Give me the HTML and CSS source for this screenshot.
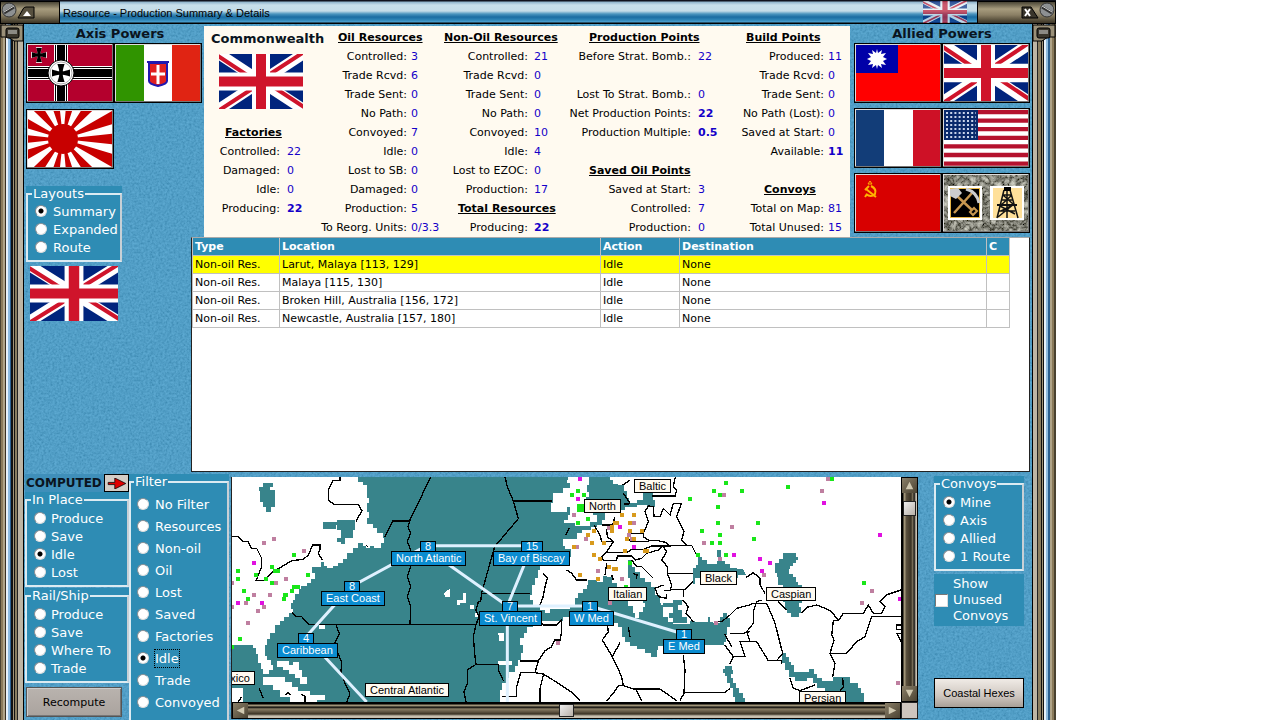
FILE: index.html
```html
<!DOCTYPE html>
<html lang="en">
<head>
<meta charset="utf-8">
<title>Resource - Production Summary &amp; Details</title>
<link rel="stylesheet" href="styles.css">
</head>
<body>
<svg class="defs" aria-hidden="true">
  <symbol id="uk" viewBox="0 0 84 55" preserveAspectRatio="none">
    <path fill="#00247d" d="M0 0h84v55H0z"/>
    <path stroke="#fff" stroke-width="11" d="M0 0l84 55M84 0L0 55"/>
    <path stroke="#cf142b" stroke-width="4" d="M-1 2L34 25M85 -2L48 22M-1 57L36 33M85 53L50 30"/>
    <path stroke="#fff" stroke-width="18" d="M42 0v55M0 27.500h84"/>
    <path stroke="#cf142b" stroke-width="10" d="M42 0v55M0 27.500h84"/>
  </symbol>
  <symbol id="cross" viewBox="-10 -10 20 20">
    <path d="M-4-10h8Q2-4 2-2Q4-2 10-4v8Q4 2 2 2Q2 4 4 10h-8Q-2 4-2 2Q-4 2-10 4v-8Q-4-2-2-2Q-2-4-4-10z"/>
  </symbol>
</svg>
<div class="window">
  <header class="titlebar">
    <div class="cap cap-left">
      <svg class="screw" viewBox="0 0 16 16"><circle cx="8" cy="8" r="7" fill="#8d9092" stroke="#333"/><path d="M3 11L13 5" stroke="#333" stroke-width="3"/><path d="M3 10L13 4" stroke="#ccc"/></svg>
      <button class="cap-btn" aria-label="Roll up"><svg viewBox="0 0 18 13"><path d="M1 12L6 3q1-2 3-2h8v11z" fill="#57503f" stroke="#000"/><path d="M6 10l4-5 4 5z" fill="#fff"/></svg></button>
    </div>
    <h1>Resource - Production Summary &amp; Details</h1>
    <svg class="title-flag"><use href="#uk"/></svg>
    <div class="cap cap-right">
      <button class="cap-btn" aria-label="Close"><svg viewBox="0 0 18 13"><path d="M1 1h9l7 11H1z" fill="#39352b" stroke="#000"/><path d="M4 3l5 7M9 3l-5 7" stroke="#fff" stroke-width="2"/></svg></button>
      <svg class="screw" viewBox="0 0 16 16"><circle cx="8" cy="8" r="7" fill="#8d9092" stroke="#333"/><path d="M3 5L13 11" stroke="#333" stroke-width="3"/><path d="M3 4L13 10" stroke="#ccc"/></svg>
    </div>
  </header>
  <div class="body">
    <div class="rail rail-left"><svg viewBox="0 0 24 18"><path d="M1 1h22v16H14L8 13H1z" fill="#9a9078" stroke="#000"/><rect x="6" y="4" width="13" height="10" rx="2" fill="#3a362c" stroke="#000"/><path d="M8 6h9v4H8z" fill="#8b8a84"/></svg></div>
    <main class="content">
      <section class="axis">
        <h2>Axis Powers</h2>
        <div class="flags">
          <button class="flag" aria-label="Germany"><svg viewBox="0 0 84 56" preserveAspectRatio="none">
            <path fill="#b4002d" d="M0 0h84v56H0z"/>
            <path stroke="#fff" stroke-width="14" d="M33 0v56M0 28h84"/><path stroke="#000" stroke-width="12" d="M33 0v56M0 28h84"/><path stroke="#fff" stroke-width="10" d="M33 0v56M0 28h84"/><path stroke="#000" stroke-width="8" d="M33 0v56M0 28h84"/>
            <circle cx="33" cy="28" r="13" fill="#fff" stroke="#000"/><circle cx="33" cy="28" r="11" fill="#fff" stroke="#aaa"/>
            <use href="#cross" x="24" y="19" width="18" height="18"/>
            <use href="#cross" x="3" y="2" width="16" height="16" fill="#e8d0d4"/><use href="#cross" x="4" y="3" width="14" height="14"/></svg></button><button class="flag" aria-label="Italy"><svg viewBox="0 0 84 56" preserveAspectRatio="none">
            <path fill="#309400" d="M0 0h28v56H0z"/><path fill="#fff" d="M28 0h28v56H28z"/><path fill="#e02413" d="M56 0h28v56H56z"/>
            <path d="M33 18h18v18q0 3-9 5-9-2-9-5z" fill="#e02020" stroke="#2018b0" stroke-width="2"/><path stroke="#fff" stroke-width="3" d="M42 20v19M35 29h14"/><path stroke="#2018b0" stroke-width="2" d="M31 17h22"/></svg></button>
          <button class="flag" aria-label="Japan"><svg viewBox="0 0 84 56" preserveAspectRatio="none">
            <path fill="#fff" d="M0 0h84v56H0z"/>
            <g fill="#c80000"><path d="M35 28L110 20V36zM35 28L105 49L98 64zM35 28L89 80L75 91zM35 28L58 99L42 103zM35 28L27 103L11 99zM35 28L-5 91L-19 80zM35 28L-28 64L-35 49zM35 28L-40 36V20zM35 28L-35 7L-28-8zM35 28L-19-24L-5-35zM35 28L11-43L27-47zM35 28L42-47L58-43zM35 28L75-35L89-24zM35 28L98-8L105 7z"/><circle cx="35" cy="28" r="15"/></g></svg></button>
        </div>
        <fieldset class="group layouts"><legend>Layouts</legend>
          <label><input type="radio" name="layout" checked>Summary</label>
          <label><input type="radio" name="layout">Expanded</label>
          <label><input type="radio" name="layout">Route</label>
        </fieldset>
        <svg class="side-flag"><use href="#uk"/></svg>
      </section>

      <section class="summary">
        <div class="col c1">
          <h2>Commonwealth</h2>
          <svg class="sum-flag"><use href="#uk"/></svg>
          <h3>Factories</h3>
          <p><span>Controlled:</span><b>22</b></p>
          <p><span>Damaged:</span><b>0</b></p>
          <p><span>Idle:</span><b>0</b></p>
          <p><span>Producing:</span><b class="strong">22</b></p>
        </div>
        <div class="col c2">
          <h3>Oil Resources</h3>
          <p><span>Controlled:</span><b>3</b></p>
          <p><span>Trade Rcvd:</span><b>6</b></p>
          <p><span>Trade Sent:</span><b>0</b></p>
          <p><span>No Path:</span><b>0</b></p>
          <p><span>Convoyed:</span><b>7</b></p>
          <p><span>Idle:</span><b>0</b></p>
          <p><span>Lost to SB:</span><b>0</b></p>
          <p><span>Damaged:</span><b>0</b></p>
          <p><span>Production:</span><b>5</b></p>
          <p><span>To Reorg. Units:</span><b>0/3.3</b></p>
        </div>
        <div class="col c3">
          <h3>Non-Oil Resources</h3>
          <p><span>Controlled:</span><b>21</b></p>
          <p><span>Trade Rcvd:</span><b>0</b></p>
          <p><span>Trade Sent:</span><b>0</b></p>
          <p><span>No Path:</span><b>0</b></p>
          <p><span>Convoyed:</span><b>10</b></p>
          <p><span>Idle:</span><b>4</b></p>
          <p><span>Lost to EZOC:</span><b>0</b></p>
          <p><span>Production:</span><b>17</b></p>
          <h3>Total Resources</h3>
          <p><span>Producing:</span><b class="strong">22</b></p>
        </div>
        <div class="col c4">
          <h3>Production Points</h3>
          <p><span>Before Strat. Bomb.:</span><b>22</b></p>
          <p></p>
          <p><span>Lost To Strat. Bomb.:</span><b>0</b></p>
          <p><span>Net Production Points:</span><b class="strong">22</b></p>
          <p><span>Production Multiple:</span><b class="strong">0.5</b></p>
          <p></p>
          <h3>Saved Oil Points</h3>
          <p><span>Saved at Start:</span><b>3</b></p>
          <p><span>Controlled:</span><b>7</b></p>
          <p><span>Production:</span><b>0</b></p>
        </div>
        <div class="col c5">
          <h3>Build Points</h3>
          <p><span>Produced:</span><b>11</b></p>
          <p><span>Trade Rcvd:</span><b>0</b></p>
          <p><span>Trade Sent:</span><b>0</b></p>
          <p><span>No Path (Lost):</span><b>0</b></p>
          <p><span>Saved at Start:</span><b>0</b></p>
          <p><span>Available:</span><b class="strong">11</b></p>
          <p></p>
          <h3>Convoys</h3>
          <p><span>Total on Map:</span><b>81</b></p>
          <p><span>Total Unused:</span><b>15</b></p>
        </div>
      </section>

      <section class="allied">
        <h2>Allied Powers</h2>
        <div class="flags">
          <button class="flag" aria-label="China"><svg viewBox="0 0 84 56" preserveAspectRatio="none"><path fill="#f00" d="M0 0h84v56H0z"/><path fill="#0000a8" d="M0 0h42v28H0z"/><path fill="#fff" d="M21 4l1 4 4-3-1 4 5-1-3 4 4 2-4 2 3 4-5-1 1 4-4-3-1 4-1-4-4 3 1-4-5 1 3-4-4-2 4-2-3-4 5 1-1-4 4 3z"/><circle cx="21" cy="14" r="5" fill="#fff"/></svg></button><button class="flag" aria-label="Commonwealth"><svg><use href="#uk"/></svg></button>
          <button class="flag" aria-label="France"><svg viewBox="0 0 84 56" preserveAspectRatio="none"><path fill="#123d78" d="M0 0h28v56H0z"/><path fill="#fff" d="M28 0h29v56H28z"/><path fill="#ce1126" d="M57 0h27v56H57z"/></svg></button><button class="flag" aria-label="United States"><svg viewBox="0 0 84 56" preserveAspectRatio="none"><path fill="#fff" d="M0 0h84v56H0z"/><path stroke="#b5122e" stroke-width="4.300" d="M0 2h84M0 10.600h84M0 19.200h84M0 27.800h84M0 36.400h84M0 45h84M0 53.600h84"/><path fill="#0a2a6c" d="M0 0h34v30H0z"/><path stroke="#c8d4ea" stroke-width="2" stroke-dasharray="2 2.200" d="M2 3h30M2 7h30M2 11h30M2 15h30M2 19h30M2 23h30M2 27h30"/></svg></button>
          <button class="flag" aria-label="Soviet Union"><svg viewBox="0 0 84 56" preserveAspectRatio="none"><path fill="#d80000" d="M0 0h84v56H0z"/><g fill="none" stroke="#ffb400" stroke-width="2"><path d="M15 11q6 3 4 8-4 4-9 0M10 14l10 8M13 11l-4 4M11 19l-2 3"/><path d="M14 6l2 3h-4z" stroke-width="1"/></g></svg></button><button class="flag" aria-label="Resources"><svg viewBox="0 0 84 56" preserveAspectRatio="none">
            <filter id="rock"><feTurbulence baseFrequency=".15" numOctaves="4"/><feColorMatrix values=".9 0 0 0 -.02 .9 0 0 0 -.02 .8 0 0 0 -.03 0 0 0 0 1"/></filter>
            <path d="M0 0h84v56H0z" filter="url(#rock)"/>
            <path fill="#fff" d="M4 11h34v34H4zM46 11h34v34H46z"/><path fill="#e8b848" d="M6 13h30v30H6z"/><path fill="#000" d="M7 14h28v28H7z"/><path fill="#ffe09a" d="M49 13h29v30H49z"/>
            <path stroke="#c89850" stroke-width="2.500" d="M12 20L28 35M10 38L28 18"/><path d="M6 14l8-1 4 5-6 6-6-3z" fill="#ccc"/><path d="M22 14q11 3 13 14" fill="none" stroke="#ccc" stroke-width="3"/><path d="M26 37l4-4 3 3-4 4z" fill="none" stroke="#c89850" stroke-width="2"/>
            <path fill="none" stroke="#111" stroke-width="1.500" d="M60 15L53 43M66 15L74 43M59 20h9M57 25h12M55 36h16M59 20l10 9M68 20L56 31M56 31l15 8M70 29L54 42M63 16v27M57 36l12-6"/><path stroke="#111" stroke-width="2" d="M53 30h20"/><path d="M60 12h7v4h-7z"/></svg></button>
        </div>
      </section>

      <section class="grid-box">
        <table>
          <colgroup><col class="w-type"><col class="w-loc"><col class="w-act"><col class="w-dest"><col class="w-c"></colgroup>
          <thead><tr><th>Type</th><th>Location</th><th>Action</th><th>Destination</th><th>C</th></tr></thead>
          <tbody>
            <tr class="sel"><td>Non-oil Res.</td><td>Larut, Malaya [113, 129]</td><td>Idle</td><td>None</td><td></td></tr>
            <tr><td>Non-oil Res.</td><td>Malaya [115, 130]</td><td>Idle</td><td>None</td><td></td></tr>
            <tr><td>Non-oil Res.</td><td>Broken Hill, Australia [156, 172]</td><td>Idle</td><td>None</td><td></td></tr>
            <tr><td>Non-oil Res.</td><td>Newcastle, Australia [157, 180]</td><td>Idle</td><td>None</td><td></td></tr>
          </tbody>
        </table>
      </section>

      <section class="bottom">
        <div class="modes">
          <div class="computed"><strong>COMPUTED</strong><button aria-label="Switch"><svg viewBox="0 0 16 10"><path d="M0 4h6V0l10 5-10 5V6H0z" fill="#e00000" stroke="#000" stroke-width=".7"/></svg></button></div>
          <fieldset class="group"><legend>In Place</legend>
            <label><input type="radio" name="place">Produce</label>
            <label><input type="radio" name="place">Save</label>
            <label><input type="radio" name="place" checked>Idle</label>
            <label><input type="radio" name="place">Lost</label>
          </fieldset>
          <fieldset class="group"><legend>Rail/Ship</legend>
            <label><input type="radio" name="rail">Produce</label>
            <label><input type="radio" name="rail">Save</label>
            <label><input type="radio" name="rail">Where To</label>
            <label><input type="radio" name="rail">Trade</label>
          </fieldset>
          <button class="recompute">Recompute</button>
        </div>
        <fieldset class="group filter"><legend>Filter</legend>
          <label><input type="radio" name="filter">No Filter</label>
          <label><input type="radio" name="filter">Resources</label>
          <label><input type="radio" name="filter">Non-oil</label>
          <label><input type="radio" name="filter">Oil</label>
          <label><input type="radio" name="filter">Lost</label>
          <label><input type="radio" name="filter">Saved</label>
          <label><input type="radio" name="filter">Factories</label>
          <label><input type="radio" name="filter" checked><span class="focus">Idle</span></label>
          <label><input type="radio" name="filter">Trade</label>
          <label><input type="radio" name="filter">Convoyed</label>
        </fieldset>
        <div class="mapbox">
          <div class="map">
            <svg viewBox="6 21 2007 675" preserveAspectRatio="xMinYMin slice" shape-rendering="crispEdges">
              <path fill="#fff" d="M0 0h2100v720H0z"/>
              <g fill="#38848b">
                <path d="M385 21V35H400V45H410V85H418V98H410V125H418V145H412V162H430V175H442V190H458V205H462V218H452V235H432V228H420V235H408V228H400V220H385V235H370V250H352V268H340V280H325V288H310V295H290V288H282V275H272V290H245V310H255V328H242V340H232V347H212V358H206V372H196V390H188V400H183V418H188V430H178V440H162V452H150V465H135V490H120V508H112V525H105V558H112V570H124V585H128V600H118V612H100V598H92V580H84V552H78V535H70V525H6V696H815L920 696H810V696V660H815V640H830V625H838V605H855V588H865V570H872V548H878V525H870V505H882V488H890V472H908V460H930V452H1000V440H1080L1130 460H1165V470H1175V500H1185V515H1200V528H1222V538H1245V548H1262V560H1280V540H1285V528H1300V515H1345V538H1418V525H1482V515H1488V495H1492V470H1500V445H1490V430H1478V440H1470V460H1448V455H1440V442H1434V455H1395V452H1380V462H1330V455H1298V430H1300V405H1290V375H1275V360H1262V345H1240V330H1225V320H1205V335H1210V350H1225V370H1240V390H1250V410H1240V425H1228V445H1215V430H1210V408H1195V392H1180V360H1160V340H1145V322H1130V318H1118V335H1102V330H1075V345H1070V358H1058V370H1045V385H1035V405H1020V418H960V430H945V420H930V405H910V390H900V375H905V345H915V325H925V300H930V285H1018V262H1024V238H1005V228H998V208H1040V190H1055V180H1082V172H1100V165H1115V150H1125V128H1150V120H1185V110H1200V100H1250V110H1275V90H1265V80H1250V92H1230V102H1198V85H1190V62H1182V45H1165V42H1148V30H1140V21z"/>
                <path d="M88 50H100V38H128V50H120V60H134V110H122V125H108V112H98V95H90zM278 155H320V150H375V180H368V205H345V222H332V215H322V205H332V180H322V165H318V178H278z"/>
                <path d="M1405 262H1415V270H1430V283H1460V272H1485V283H1500V295H1522V298H1540L1548 315H1525V325H1395V342H1390V335H1388V295H1398V285H1405zM1460 240H1474V262H1460z"/>
                <path d="M1660 250H1698V262H1704V270H1698V280H1690V287H1680V298H1678V312H1688V322H1698V335H1704V345H1716V400H1708V412H1714V430H1708V440H1682V430H1672V418H1664V395H1658V345H1645V322H1640V308H1635V278H1648V268H1660z"/>
                <path d="M1655 550H1668V560H1676V575H1682V585H1692V605H1738V598H1752V612H1762V625H1775V632H1810V622H1860V640H1884V655H1892V668H1902V696H1840V670H1785V655H1760V640H1750V625H1730V632H1695V620H1676V600H1664V580H1655z"/>
                <path d="M1484 588H1505V600H1510V612H1502V625H1510V640H1518V655H1528V670H1538V685H1545V696H1515V680H1508V655H1500V640H1492V618H1484V608H1478V598H1484z"/>
                <path d="M1195 270H1207V290H1215V305H1230V325H1245V335H1262V350H1275V375H1280V400H1292V420H1300V440H1315V470H1235V445H1228V425H1245V400H1238V385H1222V370H1210V350H1200V325H1195zM1300 400H1330V390H1356V405H1345V420H1355V440H1370V458H1330V445H1318V430H1330V412H1300z"/>
                <path d="M1240 70H1270V92H1262V105H1220V112H1195V100H1220V90H1240z"/>
              </g>
              <g fill="#fff">
                <path d="M1015 21H1078V45H1070V65H1078V80H1068V100H1078V118H1090V135H1100V155H1080V168H1035V160H1002V150H1015V135H1020V110H1010V125H962V100H968V70H998V55H1020V40H1010z"/>
                <path d="M142 572H178V585H190V575H208V600H215V622H232V643H210V625H195V612H178V600H160V590H142zM100 622H165V635H185V650H205V662H240V675H285V690H262V696H180V680H150V660H130V645H100zM6 655H40V696H6zM268 465H284V476H268z"/>
                <path d="M642 370L660 355V380H645zM680 390H700V370H708V400H690V405H680zM720 405H732V418H720zM735 428H745V440H735zM805 490H822V512H808zM805 572H845V585H805z"/>
              </g>
              <g fill="none" stroke="#000" stroke-width="4">
                <path d="M6 200H25L40 215H55L65 235H80L95 265V290L85 315L78 332H100L125 308L155 290L185 272L220 268L235 255L248 225H270V240L265 250L277 270M330 21V32H308L295 60L296 92L315 104H385L396 122L378 154M602 21L540 150L534 170L542 190L532 215L542 240L534 265L542 290L532 320L542 350L532 380L542 410L540 464M540 153H488L464 202M186 428L200 440H215L238 464H738L747 440L738 420L745 395H752L755 368L794 230L865 146L850 93L832 50L825 21M850 93H965M755 370H900M318 466L328 490L312 525L335 575L333 605L345 640L360 672L350 696M88 655L100 685M165 675L175 668L182 676M225 696V680L215 672M25 696L35 680M408 225L415 232"/>
                <path d="M738 464L730 500L735 560L738 583L712 600V640L702 665L708 696M738 583H805V600L820 632M940 310L952 325L945 350L938 385L930 405M1010 300L1025 310L1040 330H1072M1018 175L1008 195M930 455L940 465H980L995 450V485L990 510H975L965 530L945 542L925 573H870M925 573L915 608L940 612L985 640L1030 670L1050 692M915 608H872L860 650V680H815M940 615L930 655V696M1130 450L1135 485L1117 510L1147 560L1175 620L1180 647H1165L1150 670L1130 692M1147 560L1170 518M1180 647L1210 657H1290L1340 692M1218 657L1235 692M1195 470L1200 500"/>
                <path d="M1092 165L1110 195L1115 215H1150L1128 248L1115 260L1120 272H1160L1162 258H1205L1215 270L1235 265L1250 250L1285 240L1300 226H1370M1128 248H1190L1205 238H1240L1265 228H1318L1310 218L1285 212H1258L1240 200V190H1200L1193 205L1205 215H1258M1115 165H1148L1155 140M1150 175L1130 180L1132 200L1150 215M1240 190L1255 155L1245 125L1255 108L1270 110L1272 140H1290L1300 115L1320 135L1330 100H1354L1340 140L1362 185L1355 210L1370 226H1385L1402 260M1336 21L1330 50L1340 60L1335 78H1265M1298 226L1310 245L1295 270L1312 290V310H1388M1205 270L1220 290H1235L1270 325M1312 310L1325 345L1320 362H1302M1320 358H1365L1388 335M1300 345L1275 355L1285 380L1310 385V372M1210 310L1222 315L1218 325M1130 280L1125 315M1145 315L1150 330M1182 102H1198M1178 45L1200 30M1180 70L1200 100"/>
                <path d="M1358 390L1375 410L1368 430L1390 455M1360 360V380M1452 455H1475L1500 435L1520 415L1558 405L1570 400H1610L1625 435L1635 460L1658 550L1640 572H1615L1580 515H1560L1550 485L1570 460V425L1580 395L1595 390M1548 322L1570 308L1590 325V345L1605 370M1645 395L1670 420M1715 430L1730 412L1760 405L1785 415L1805 425L1825 452H1810L1805 495L1812 510L1800 550L1815 580L1808 620M1825 452L1840 430H1900L1915 405L1930 430H1955L1965 410L1950 395L1968 375L2013 360M2013 440H1925L1905 500L1880 515L1850 550H1800M2013 465H2000V478H2013M2013 490H2000L2013 515M1484 525L1510 560H1545L1530 515H1560M1500 490H1540L1560 485M1510 560L1500 582M1484 492L1505 530M1360 555L1365 600L1362 670L1350 692M1362 668H1485L1500 655M1680 625L1690 655L1710 662L1755 645M1838 625L1840 650L1830 664M1630 572H1655V582"/>
              </g>
              <g fill="none" stroke="#dff1ff" stroke-width="9" shape-rendering="auto">
                <path d="M410 696L228 500L363 350L590 227H905M580 230L832 408H1080L1360 492M905 230L832 408L832 696"/>
              </g>
              <g fill="none" stroke-width="12">
                <path stroke="#19e619" d="M18 303h12M18 327h12M36 363h12M48 387h12M24 507h12M4 531h8M72 315h12M120 291h12M130 303h20M120 339h12M102 327h12M186 255h12M228 315h12M186 352h24M180 363h12M160 375h14M156 387h12M1020 75h12M1038 63h12M1056 75h12M1042 107h26M1042 120h20M1068 147h12M1038 159h12M1194 280h12M1182 350h12M1238 387h12M1374 87h12M1446 63h12M1482 39h12M1464 75h12M1458 111h12M1458 159h12M1530 63h12M1410 183h12M1464 195h12M1440 219h12M1464 219h12M1482 255h12M1398 255h12M1578 159h12M1566 207h12M1668 51h12M1800 27h12M1896 339h12"/>
                <path stroke="#bf7fa0" d="M96 219h12M126 207h12M216 243h12M162 327h12M132 339h12M114 375h12M66 375h12M42 399h12M96 411h12M78 423h12M48 459h12M4 339h8M4 411h8M1026 135h12M1062 207h12M1036 231h12M1200 207h12M1170 327h12M1098 303h12M1190 195h12M1206 159h12M1134 399h12M978 519h12M1476 75h12M1500 171h12M1416 219h12M1464 267h12M1788 27h12M1770 63h12M1596 315h12M1452 459h12M1920 363h12M1890 399h12M1998 639h12M1130 175h12"/>
                <path stroke="#e010e0" d="M66 279h12M18 399h12M90 399h12M1044 27h12M1038 87h12M1164 171h12M1206 232h12M1506 255h12M1584 267h12M1614 279h12M1590 303h12M1776 99h12M1944 195h12M2004 387h12"/>
                <path stroke="#d89a1c" d="M1026 231h12M1068 195h12M1086 183h12M1080 219h12M1086 255h12M1104 267h12M1044 315h12M1098 327h12M1130 291h12M1146 297h18M1150 159h18M1140 171h12M1170 135h12M1206 135h12M1194 159h12M1194 183h12M1206 207h12M1178 243h12M1230 183h12M1186 207h12M1116 219h12M1140 183h12M1238 243h18"/>
              </g>
            </svg>
            <span class="pin num" style="left:188px;top:64px">8</span><span class="pin" style="left:159px;top:74px">North Atlantic</span>
            <span class="pin num" style="left:289px;top:64px">15</span><span class="pin" style="left:261px;top:74px">Bay of Biscay</span>
            <span class="pin num" style="left:112px;top:104px">8</span><span class="pin" style="left:89px;top:114px">East Coast</span>
            <span class="pin num" style="left:66px;top:156px">4</span><span class="pin" style="left:45px;top:166px">Caribbean</span>
            <span class="pin num" style="left:270px;top:124px">7</span><span class="pin" style="left:247px;top:134px">St. Vincent</span>
            <span class="pin num" style="left:350px;top:124px">1</span><span class="pin" style="left:337px;top:134px">W Med</span>
            <span class="pin num" style="left:444px;top:152px">1</span><span class="pin" style="left:431px;top:162px">E Med</span>
            <span class="pin sea" style="left:402px;top:2px">Baltic</span>
            <span class="pin sea" style="left:352px;top:22px">North</span>
            <span class="pin sea" style="left:376px;top:110px">Italian</span>
            <span class="pin sea" style="left:468px;top:94px">Black</span>
            <span class="pin sea" style="left:534px;top:110px">Caspian</span>
            <span class="pin sea" style="left:567px;top:214px">Persian</span>
            <span class="pin sea" style="left:133px;top:206px">Central Atlantic</span>
            <span class="pin sea" style="left:-22px;top:194px">Mexico</span>
          </div>
          <div class="vbar"><button aria-label="Scroll up"><svg viewBox="0 0 16 16"><path d="M8 4l4 8H4z"/></svg></button><i class="thumb"></i><button aria-label="Scroll down"><svg viewBox="0 0 16 16"><path d="M8 12L4 4h8z"/></svg></button></div>
          <div class="hbar"><button aria-label="Scroll left"><svg viewBox="0 0 16 16"><path d="M4 8l8-4v8z"/></svg></button><i class="thumb"></i><button aria-label="Scroll right"><svg viewBox="0 0 16 16"><path d="M12 8L4 4v8z"/></svg></button></div>
          <div class="corner"></div>
        </div>
        <div class="right">
          <fieldset class="group"><legend>Convoys</legend>
            <label><input type="radio" name="convoy" checked>Mine</label>
            <label><input type="radio" name="convoy">Axis</label>
            <label><input type="radio" name="convoy">Allied</label>
            <label><input type="radio" name="convoy">1 Route</label>
          </fieldset>
          <label class="unused"><input type="checkbox"><span>Show<br>Unused<br>Convoys</span></label>
          <button class="coastal">Coastal Hexes</button>
        </div>
      </section>
    </main>
    <div class="rail rail-right"><svg viewBox="0 0 24 18"><path d="M23 1H1v16h9l6-4h7z" fill="#9a9078" stroke="#000"/><rect x="5" y="4" width="13" height="10" rx="2" fill="#3a362c" stroke="#000"/><path d="M7 6h9v4H7z" fill="#8b8a84"/></svg></div>
  </div>
</div>
</body>
</html>
```
FILE: styles.css
```css
* { box-sizing: border-box; }
body {
  margin: 0;
  background: #fff;
  font: 11px/19px "DejaVu Sans", sans-serif;
  color: #000;
}
h1, h2, h3, p { margin: 0; }
h2 { font-size: 13px; line-height: 20px; color: #0a1420; text-align: center; }
button { padding: 0; margin: 0; font: inherit; color: #000; }
svg { display: block; }
.defs { position: absolute; width: 0; height: 0; }

.window {
  width: 82.5%;
  height: 100vh;
  min-height: 720px;
  display: flex;
  flex-direction: column;
  overflow: hidden;
}

.titlebar {
  flex: none;
  height: 24px;
  display: flex;
  align-items: center;
  background: linear-gradient(#10121c 0 1px, #8fb4cc 2px, #c8dfea 5px, #c4dce8 11px, #4a94be 14px, #1a6ca2 17px, #2f86b8 20px, #4ba0d0 22px, #000 23px);
}
.titlebar h1 {
  flex: 1;
  padding: 1px 0 0 3px;
  font: 11px/20px "Liberation Sans", sans-serif;
}
.title-flag { width: 44px; height: 22px; opacity: .65; }
.cap {
  height: 23px;
  display: flex;
  align-items: center;
  border: 1px solid #000;
  background: linear-gradient(#4a4536, #a79c7e 7px, #8a7f64 13px, #3b3425);
}
.cap-left { width: 60px; }
.cap-right { width: 79px; margin-left: 10px; justify-content: flex-end; }
.screw { width: 16px; height: 16px; align-self: flex-start; }
.cap-btn { border: 0; background: none; width: 18px; height: 13px; }

.body { flex: 1; display: flex; min-height: 0; }
.rail { flex: none; width: 24px; }
.rail-left { background: linear-gradient(90deg, #4a4230 0 1px, #8a7a5a 1px 3px, #b0a488 3px 5px, #3a3020 5px 6px, #e8f2fa 6px 8px, #8fbce0 8px 10px, #2b6090 10px 11px, #111 11px 13px, #a09478 13px 14px, #111 14px 15px, #8a7e60 15px 17px, #222 17px 18px, #bdb5a4 18px 23px, #000 23px); }
.rail-right { background: linear-gradient(90deg, #000 0 1px, #bdb5a4 1px 5px, #222 5px 6px, #8a7e60 6px 9px, #111 9px 10px, #a09478 10px 11px, #111 11px 12px, #e8f2fa 12px 14px, #8fbce0 14px 16px, #2b6090 16px 18px, #b0a488 18px 20px, #8a7a5a 20px 22px, #4a4230 22px 24px); }

.content {
  flex: 1;
  min-width: 0;
  display: grid;
  grid-template-columns: 167px 13px minmax(0, 1fr) 182px;
  grid-template-rows: 213px 235px minmax(0, 1fr);
  background: #4a94be url("data:image/svg+xml,%3Csvg xmlns='http://www.w3.org/2000/svg' width='128' height='128'%3E%3Cfilter id='n'%3E%3CfeTurbulence type='fractalNoise' baseFrequency='.45' numOctaves='2' stitchTiles='stitch'/%3E%3CfeColorMatrix values='.5 0 0 0 -.02 .5 0 0 0 .29 .5 0 0 0 .44 0 0 0 0 1' color-interpolation-filters='sRGB'/%3E%3C/filter%3E%3Crect width='128' height='128' filter='url(%23n)' opacity='.5'/%3E%3C/svg%3E");
}

.axis { grid-area: 1 / 1 / 3 / 3; padding-left: 2px; }
.axis h2, .allied h2 { width: 176px; height: 19px; }
.axis h2 { padding-left: 12px; }
.allied { grid-area: 1 / 4; padding-left: 4px; }
.flags {
  display: grid;
  grid-template-columns: 88px 88px;
  gap: 6px 0;
}
.allied .flags { row-gap: 5px; }
.flag {
  height: 60px;
  border: 1px solid #000;
  background: #ddd;
  box-shadow: inset -1px -1px 0 #777;
  padding: 1px;
}
.flag svg { width: 84px; height: 56px; }
.side-flag { width: 88px; height: 55px; margin: 4px 0 0 4px; }

.summary {
  grid-area: 1 / 3;
  margin: 2px 0 0;
  padding-top: 2px;
  background: #fffaf0;
  display: grid;
  grid-template-columns: 111fr 126fr 122fr 169fr 118fr;
}
.col { min-width: 0; white-space: nowrap; }
.col p { display: flex; height: 19px; }
.col p span { flex: none; text-align: right; }
.col b { font-weight: normal; color: #1400c8; }
.col b.strong { font-weight: bold; }
.col h3 { font-size: 11px; line-height: 19px; text-decoration: underline; }
.c1 span { width: 76px; margin-right: 7px; }
.c1 h2 { padding-left: 7px; text-align: left; line-height: 22px; }
.c1 h3 { padding-left: 21px; }
.sum-flag { width: 84px; height: 55px; margin: 4px 0 14px 15px; }
.c2 span { width: 92px; margin-right: 4px; }
.c2 h3 { padding-left: 23px; }
.c3 span { width: 87px; margin-right: 6px; }
.c3 h3 { padding-left: 3px; }
.c3 p + h3 { padding-left: 17px; }
.c4 span { width: 128px; margin-right: 7px; }
.c4 h3 { padding-left: 26px; }
.c5 span { width: 92px; margin-right: 4px; }
.c5 h3 { padding-left: 14px; }
.c5 p + h3 { padding-left: 32px; }

.grid-box {
  grid-area: 2 / 2 / 3 / 5;
  margin-right: 2px;
  border: 1px solid #222;
  border-top-color: #aaa;
  background: #fff;
  z-index: 1;
}
table { width: 818px; max-width: 100%; table-layout: fixed; border-collapse: separate; border-spacing: 0; }
.w-type { width: 88px; }
.w-loc { width: 321px; }
.w-act { width: 79px; }
.w-dest { width: 307px; }
.w-c { width: 23px; }
th, td { height: 18px; padding: 0 2px; line-height: 17px; text-align: left; border: 0 solid #c0c0c0; border-width: 0 1px 1px 0; white-space: nowrap; }
th:first-child, td:first-child { border-left-width: 1px; }
th { background: #2e8cb4; color: #fff; }
.sel td { background: #ff0; }

.bottom { grid-area: 3 / 1 / 4 / 5; display: flex; padding-top: 2px; }
.modes { flex: none; width: 105px; padding-left: 1px; }
.computed { height: 18px; display: flex; justify-content: space-between; align-items: center; background: #3f8fba; }
.computed strong { font-size: 12px; padding-left: 1px; color: #0a1420; }
.computed button { width: 25px; height: 18px; border: 1px solid #000; background: #d4cdc6; display: grid; place-items: center; }
.computed svg { width: 20px; height: 11px; }

.group {
  margin: 0 0 1px;
  padding: 1px 2px 4px 7px;
  min-width: 0;
  border: 2px solid #dcebf2;
  border-right-color: #c8d0d6;
  background: #2e8cb4;
  box-shadow: 0 -7px 0 #2e8cb4;
  color: #fff;
  font-size: 13px;
}
.group legend { padding: 0 1px; margin-left: -3px; line-height: 16px; background: #2e8cb4; }
.group label { display: flex; align-items: center; height: 18px; gap: 5px; white-space: nowrap; }
.group.layouts { width: 96px; margin: 17px 0 0; padding-top: 0; }
.layouts label { gap: 6px; }
input { appearance: none; flex: none; margin: 0; background: #fff; }
input[type="radio"] { width: 12px; height: 12px; border: 1px solid #8a8f94; border-right-color: #ddd; border-bottom-color: #ddd; border-radius: 50%; }
input[type="radio"]:checked { background: radial-gradient(circle, #000 0 2px, #fff 3px); }
input[type="checkbox"] { width: 13px; height: 13px; border: 1px solid #777; border-right-color: #ddd; border-bottom-color: #ddd; }
.filter { flex: none; width: 100px; margin: 0 0 -6px; padding: 3px 2px 4px 6px; }
.filter label { height: 22px; gap: 6px; }
.focus { outline: 1px dotted #000; line-height: 17px; }
.recompute { display: block; width: 96px; height: 30px; margin: 4px 0 0 1px; border: 1px solid #555; background: linear-gradient(#b9b3ae, #aaa39e); box-shadow: inset 1px 1px 0 #ccc, inset -1px -1px 0 #777; }

.mapbox {
  flex: 1;
  min-width: 0;
  margin: 3px 16px 1px 2px;
  border-left: 1px solid #222;
  display: grid;
  grid-template-columns: minmax(0, 1fr) 17px;
  grid-template-rows: minmax(0, 1fr) 17px;
}
.map { position: relative; overflow: hidden; }
.map svg { width: 100%; height: 100%; }
.pin {
  position: absolute;
  padding: 0 4px;
  border: 1px solid #000;
  background: #0b8cd0;
  color: #fff;
  font: 11px/13px "Liberation Sans", sans-serif;
  white-space: nowrap;
}
.pin.num { line-height: 9px; }
.pin.sea { background: #fffaf0; color: #000; line-height: 12px; }
.vbar, .hbar { display: flex; border: 1px solid #000; background: linear-gradient(90deg, #000 0 1px, #a09478 2px 3px, #5c5240 4px, #3a3224 9px, #8a7e66 11px, #000 12px, #c8c0b0 14px); }
.vbar { flex-direction: column; }
.hbar { background: linear-gradient(#000 0 1px, #a09478 2px 3px, #000 4px, #8a7e66 6px, #5c5240 9px, #3a3224 11px, #c8c0b0 13px); }
.vbar button, .hbar button { flex: none; width: 15px; height: 15px; border: 0; background: linear-gradient(135deg, #8a7f68, #4a4232); }
.vbar svg, .hbar svg { width: 15px; height: 15px; fill: #d0c8b0; }
.thumb { flex: none; background: linear-gradient(135deg, #eee, #b8b0a8); border: 1px solid #222; }
.vbar .thumb { width: 13px; height: 15px; margin: 8px 1px auto; }
.hbar .thumb { width: 15px; height: 13px; margin: 1px auto 1px 311px; }
.corner { background: #cdc5be; border: 1px solid #222; }

.right { flex: none; width: 90px; margin-right: 8px; padding-top: 2px; }
.right .group { margin-bottom: 3px; }
.unused { display: flex; align-items: center; gap: 5px; padding: 2px 1px; background: #2e8cb4; color: #fff; font-size: 13px; line-height: 16px; }
.coastal { width: 90px; height: 30px; margin-top: 52px; border: 1px solid #000; background: linear-gradient(#f0ebe6, #cfc7c0 60%, #a8a098); font: 11px "Liberation Sans", sans-serif; }
```
